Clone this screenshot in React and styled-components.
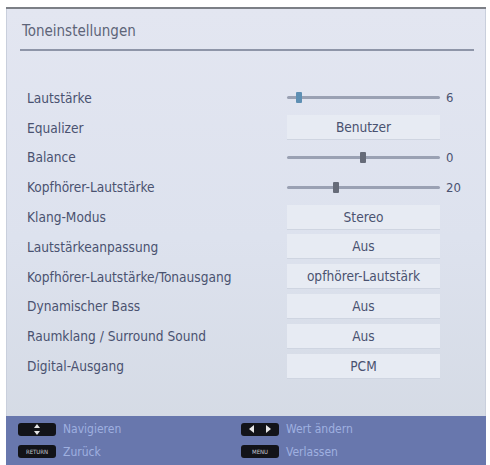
import React from "react";
import styled, { createGlobalStyle } from "styled-components";

const GlobalStyle = createGlobalStyle`
	html, body {
		margin: 0;
		padding: 0;
		background: #ffffff;
	}
	body {
		font-family: "DejaVu Sans Condensed", "DejaVu Sans", "Liberation Sans", sans-serif;
		font-stretch: condensed;
	}
`;

const Page = styled.div`
	width: 490px;
	height: 465px;
	padding: 7px 4px 2px 6px;
	box-sizing: border-box;
`;

const Panel = styled.div`
	height: 100%;
	display: flex;
	flex-direction: column;
	border-top: 2px solid #7c7f86;
	background: linear-gradient(180deg, #e3e6f1 0%, #dde2ee 50%, #d3d9e3 100%);
	box-shadow: inset 1px 0 0 #c9cfdc, inset -1px 0 0 #c9cfdc;
`;

const Header = styled.div`
	margin: 0 12px 0 14px;
	padding: 13px 0 9px 2px;
	border-bottom: 2px solid #8e95a8;
	font-size: 15px;
	color: #5d6478;
`;

const Rows = styled.div`
	flex: 1;
	display: flex;
	flex-direction: column;
	padding: 32px 0 0 21px;
`;

const Row = styled.div`
	height: 29.8px;
	display: flex;
	align-items: center;
`;

const Label = styled.div`
	width: 260px;
	font-size: 13.6px;
	color: #4a5270;
	white-space: nowrap;
`;

const ValueBox = styled.div`
	width: 153px;
	height: 24px;
	display: flex;
	align-items: center;
	justify-content: center;
	background: #e7ebf3;
	border-bottom: 1px solid #cfd5e1;
	font-size: 13.6px;
	color: #4a5270;
	white-space: nowrap;
	overflow: hidden;
`;

const SliderWrap = styled.div`
	display: flex;
	align-items: center;
	gap: 6px;
`;

const Track = styled.div`
	position: relative;
	width: 153px;
	height: 3px;
	background: #9aa1b3;
	border-radius: 2px;
`;

const Thumb = styled.div`
	position: absolute;
	top: -4px;
	width: 6px;
	height: 11px;
	background: ${(p) => p.$color};
	border-radius: 1px;
`;

const SliderValue = styled.div`
	font-size: 13px;
	color: #4a5270;
`;

const Footer = styled.div`
	height: 49px;
	display: grid;
	grid-template-columns: 223px 1fr;
	grid-template-rows: 1fr 1fr;
	align-items: center;
	padding: 2px 0 2px 12px;
	box-sizing: border-box;
	background: #6877ad;
`;

const Hint = styled.div`
	display: flex;
	align-items: center;
	gap: 7px;
	font-size: 12px;
	color: #9fb0e0;
`;

const Key = styled.div`
	width: 38px;
	height: 13px;
	border-radius: 3px;
	background: #121318;
	display: flex;
	align-items: center;
	justify-content: center;
	color: #c8cad2;
	font-size: 6px;
	font-family: "DejaVu Sans", sans-serif;
`;

function Slider({ pos, value, color }) {
	return (
		<SliderWrap>
			<Track>
				<Thumb $color={color} style={{ left: pos }} />
			</Track>
			<SliderValue>{value}</SliderValue>
		</SliderWrap>
	);
}

const rows = [
	{ label: "Lautstärke", slider: { pos: 9, value: "6", color: "#5e8fb3" } },
	{ label: "Equalizer", value: "Benutzer" },
	{ label: "Balance", slider: { pos: 73, value: "0", color: "#666b78" } },
	{ label: "Kopfhörer-Lautstärke", slider: { pos: 46, value: "20", color: "#666b78" } },
	{ label: "Klang-Modus", value: "Stereo" },
	{ label: "Lautstärkeanpassung", value: "Aus" },
	{ label: "Kopfhörer-Lautstärke/Tonausgang", value: "opfhörer-Lautstärk" },
	{ label: "Dynamischer Bass", value: "Aus" },
	{ label: "Raumklang / Surround Sound", value: "Aus" },
	{ label: "Digital-Ausgang", value: "PCM" },
];

export default function App() {
	return (
		<>
			<GlobalStyle />
			<Page>
				<Panel>
					<Header>Toneinstellungen</Header>
					<Rows>
						{rows.map((r) => (
							<Row key={r.label}>
								<Label>{r.label}</Label>
								{r.slider ? <Slider {...r.slider} /> : <ValueBox>{r.value}</ValueBox>}
							</Row>
						))}
					</Rows>
					<Footer>
						<Hint>
							<Key>
								<svg width="8" height="11" viewBox="0 0 8 11">
									<path d="M4 0 L7 4 L1 4 Z M4 11 L7 7 L1 7 Z" fill="#e6e6e6" />
								</svg>
							</Key>
							Navigieren
						</Hint>
						<Hint>
							<Key>
								<svg width="22" height="8" viewBox="0 0 22 8">
									<path d="M0 4 L5 0 L5 8 Z M22 4 L17 0 L17 8 Z" fill="#e6e6e6" />
								</svg>
							</Key>
							Wert ändern
						</Hint>
						<Hint>
							<Key>RETURN</Key>
							Zurück
						</Hint>
						<Hint>
							<Key>MENU</Key>
							Verlassen
						</Hint>
					</Footer>
				</Panel>
			</Page>
		</>
	);
}
